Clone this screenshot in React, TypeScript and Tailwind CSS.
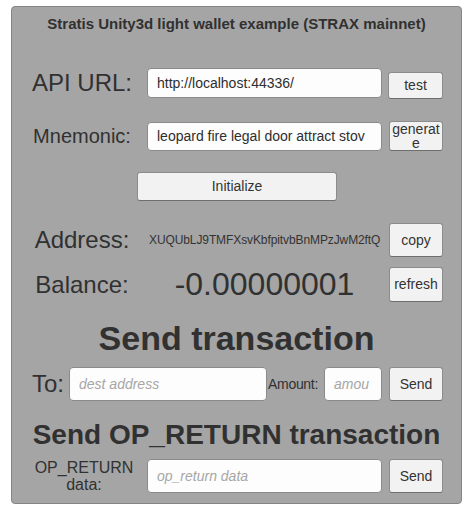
import React from "react";

const Btn = ({ children, className = "" }: { children: React.ReactNode; className?: string }) => (
  <button
    className={`w-[54px] rounded-[3px] border border-[#8c8c8c] border-b-[#6e6e6e] bg-[#f2f2f2] text-[14px] text-[#333] ${className}`}
  >
    {children}
  </button>
);

const Field = ({
  text,
  placeholder,
  className = "",
}: {
  text?: string;
  placeholder?: string;
  className?: string;
}) => (
  <div
    className={`flex items-center overflow-hidden whitespace-nowrap rounded-[4px] border border-[#8a8a8a] bg-[#fdfdfd] pl-[9px] text-[14px] ${className}`}
  >
    {text ? (
      <span className="text-[#2e2e2e]">{text}</span>
    ) : (
      <span className="italic text-[#a6a6a6]">{placeholder}</span>
    )}
  </div>
);

export default function App() {
  return (
    <div className="min-h-screen bg-white pl-[11px] pt-[6px] font-['Liberation_Sans',Arial,sans-serif] text-[#313131]">
      <div className="box-border flex h-[498px] w-[451px] flex-col rounded-[4px] border border-[#858585] bg-[#a5a5a5] pt-[8px]">
        {/* title */}
        <div className="h-[17px] text-center text-[15px] font-bold leading-[17px]">
          Stratis Unity3d light wallet example (STRAX mainnet)
        </div>

        {/* API URL */}
        <div className="mt-[36px] flex h-[31px] items-start pl-[5px]">
          <div className="w-[130px] text-center text-[24px] leading-[30px]">API URL:</div>
          <Field text="http://localhost:44336/" className="h-[30px] w-[235px]" />
          <Btn className="ml-[6px] mt-[4px] h-[27px] w-[55px]">test</Btn>
        </div>

        {/* Mnemonic */}
        <div className="mt-[22px] flex h-[30px] items-center pl-[5px]">
          <div className="w-[130px] text-center text-[20px]">Mnemonic:</div>
          <Field
            text="leopard fire legal door attract stov"
            className="mt-[1px] h-[29px] w-[235px]"
          />
          <Btn className="ml-[7px] h-[30px] break-all px-[1px] leading-[14px]">generate</Btn>
        </div>

        {/* Initialize */}
        <div className="mt-[21px] flex h-[29px] pl-[125px]">
          <Btn className="h-[29px] w-[200px]">Initialize</Btn>
        </div>

        {/* Address */}
        <div className="mt-[22px] flex h-[34px] items-center pl-[5px]">
          <div className="w-[130px] text-center text-[24px]">Address:</div>
          <div className="w-[235px] whitespace-nowrap pl-[2px] text-[12px] tracking-[-0.1px] text-[#333]">
            XUQUbLJ9TMFXsvKbfpitvbBnMPzJwM2ftQ
          </div>
          <Btn className="ml-[7px] h-[34px]">copy</Btn>
        </div>

        {/* Balance */}
        <div className="mt-[10px] flex h-[35px] items-center pl-[5px]">
          <div className="w-[130px] text-center text-[24px]">Balance:</div>
          <div className="w-[235px] text-center text-[32px] leading-[35px]">-0.00000001</div>
          <Btn className="ml-[7px] h-[35px]">refresh</Btn>
        </div>

        <div className="mt-[16px] h-[40px] text-center text-[34px] font-bold leading-[40px]">
          Send transaction
        </div>

        {/* To / Amount */}
        <div className="mt-[9px] flex h-[34px] items-center pl-[20px]">
          <div className="w-[37px] text-[24px]">To:</div>
          <Field placeholder="dest address" className="h-[34px] w-[198px] pl-[7px]" />
          <div className="w-[57px] pl-[1px] text-[14px] tracking-[-0.3px]">Amount:</div>
          <Field placeholder="amou" className="h-[34px] w-[58px]" />
          <Btn className="ml-[7px] h-[34px]">Send</Btn>
        </div>

        <div className="mt-[18px] h-[32px] text-center text-[28px] font-bold leading-[32px]">
          Send OP_RETURN transaction
        </div>

        {/* OP_RETURN */}
        <div className="mt-[8px] flex h-[34px] items-center pl-[5px]">
          <div className="w-[134px] text-center text-[16px] leading-[17px]">
            OP_RETURN
            <br />
            data:
          </div>
          <Field placeholder="op_return data" className="-ml-[4px] h-[34px] w-[235px]" />
          <Btn className="ml-[7px] h-[34px]">Send</Btn>
        </div>
      </div>
    </div>
  );
}
